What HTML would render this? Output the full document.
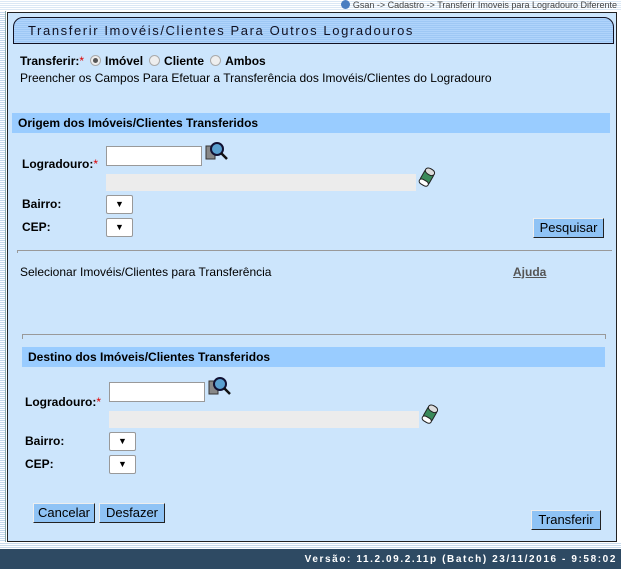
<!DOCTYPE html>
<html><head><meta charset="utf-8"><style>
*{margin:0;padding:0;box-sizing:border-box}
body{width:621px;height:569px;position:relative;overflow:hidden;background:#fff;font-family:"Liberation Sans",Arial,sans-serif;font-size:12px;color:#000}
.a{position:absolute}
#top{left:0;top:0;width:621px;height:11px;background:repeating-linear-gradient(#fff 0 1px,#dbe8f5 1px 2px)}
#left{left:0;top:11px;width:6px;height:532px;background:repeating-linear-gradient(#fff 0 1px,#c4d8ec 1px 2px);border-right:1px solid #8aa}
#panel{left:7px;top:12px;width:610px;height:530px;background:#cce5fc;border:1px solid #222}
#title{left:13px;top:17px;width:601px;height:27px;border:1px solid #112;border-radius:10px 10px 0 0;background:repeating-linear-gradient(#b0d4fb 0 1px,#9ec8f5 1px 2px);font-size:13px;letter-spacing:1.6px;color:#112;padding:5px 0 0 14px}
.hd{background:#99ccff;font-weight:bold;padding:3px 0 0 6px;height:20px}
.in{background:#fff;border:1px solid #999}
.gr{background:#ececec}
.sel{background:#fff;border:1px solid #999;border-radius:2px;font-size:9px;text-align:center;line-height:17px}
.btn{background:#8fc3f5;border:1px solid #222;border-top-color:#eee;border-left-color:#eee;font-size:13px;text-align:center;line-height:18px}
.lb{font-weight:bold}
.r{color:#d00}
.rad{display:inline-block;width:11px;height:11px;border:1px solid #aaa;border-radius:50%;background:#eee;vertical-align:-1px;margin:0 4px 0 6px;position:relative}
.rad.on::after{content:"";position:absolute;left:2px;top:2px;width:5px;height:5px;border-radius:50%;background:#555}
#foot{left:0;top:549px;width:621px;height:20px;background:#2e4a63;color:#fff;font-weight:bold;font-size:10px;letter-spacing:1.6px;text-align:right;padding:5px 4px 0 0}
#fl{left:0;top:542px;width:621px;height:7px;background:repeating-linear-gradient(#fff 0 1px,#c9dbec 1px 2px)}
</style></head><body>
<div id="top" class="a"></div>
<div class="a" style="right:4px;top:0;font-size:9px;color:#444"><span style="display:inline-block;width:9px;height:9px;border-radius:50%;background:#4a7ec0;vertical-align:-1px"></span> Gsan -&gt; Cadastro -&gt; Transferir Imoveis para Logradouro Diferente</div>
<div id="left" class="a"></div>
<div id="panel" class="a"></div>
<div id="title" class="a">Transferir Imovéis/Clientes Para Outros Logradouros</div>
<div class="a" style="left:20px;top:54px;font-size:12px"><b>Transferir:</b><span class="r">*</span><span class="rad on"></span><b>Imóvel</b><span class="rad"></span><b>Cliente</b><span class="rad"></span><b>Ambos</b></div>
<div class="a" style="left:20px;top:71px">Preencher os Campos Para Efetuar a Transferência dos Imovéis/Clientes do Logradouro</div>
<div class="a hd" style="left:12px;top:113px;width:598px">Origem dos Imóveis/Clientes Transferidos</div>
<div class="a lb" style="left:22px;top:157px">Logradouro:<span class="r" style="font-weight:normal">*</span></div>
<div class="a in" style="left:106px;top:146px;width:96px;height:20px"></div>
<svg class="a" style="left:205px;top:141px" width="24" height="20"><rect x="1" y="5" width="9" height="13" fill="#888" stroke="#333"/><circle cx="12" cy="8" r="6" fill="#5aa0d0" stroke="#113" stroke-width="2"/><line x1="16" y1="12" x2="22" y2="18" stroke="#111" stroke-width="2.5"/></svg>
<div class="a gr" style="left:106px;top:174px;width:310px;height:17px"></div>
<svg class="a" style="left:418px;top:166px" width="18" height="22"><g transform="rotate(30 9 11)"><rect x="4" y="2" width="10" height="18" rx="5" fill="#3a8a5a" stroke="#222"/><rect x="4" y="2" width="10" height="6" rx="4" fill="#ddd" stroke="#222"/><rect x="4" y="15" width="10" height="5" rx="3" fill="#fff" stroke="#222"/></g></svg>
<div class="a lb" style="left:22px;top:197px">Bairro:</div>
<div class="a sel" style="left:106px;top:195px;width:27px;height:19px">▼</div>
<div class="a lb" style="left:22px;top:220px">CEP:</div>
<div class="a sel" style="left:106px;top:218px;width:27px;height:19px">▼</div>
<div class="a btn" style="left:533px;top:218px;width:71px;height:20px">Pesquisar</div>
<div class="a" style="left:17px;top:250px;width:595px;height:3px;border-top:1px solid #999;border-left:1px solid #999"></div>
<div class="a" style="left:20px;top:265px">Selecionar Imovéis/Clientes para Transferência</div>
<div class="a" style="left:513px;top:265px;color:#555;font-weight:bold;text-decoration:underline">Ajuda</div>
<div class="a" style="left:22px;top:334px;width:584px;height:5px;border:1px solid #999;border-bottom:none"></div>
<div class="a hd" style="left:22px;top:347px;width:583px">Destino dos Imóveis/Clientes Transferidos</div>
<div class="a lb" style="left:25px;top:395px">Logradouro:<span class="r" style="font-weight:normal">*</span></div>
<div class="a in" style="left:109px;top:382px;width:96px;height:20px"></div>
<svg class="a" style="left:208px;top:376px" width="24" height="20"><rect x="1" y="5" width="9" height="13" fill="#888" stroke="#333"/><circle cx="12" cy="8" r="6" fill="#5aa0d0" stroke="#113" stroke-width="2"/><line x1="16" y1="12" x2="22" y2="18" stroke="#111" stroke-width="2.5"/></svg>
<div class="a gr" style="left:109px;top:411px;width:310px;height:17px"></div>
<svg class="a" style="left:421px;top:403px" width="18" height="22"><g transform="rotate(30 9 11)"><rect x="4" y="2" width="10" height="18" rx="5" fill="#3a8a5a" stroke="#222"/><rect x="4" y="2" width="10" height="6" rx="4" fill="#ddd" stroke="#222"/><rect x="4" y="15" width="10" height="5" rx="3" fill="#fff" stroke="#222"/></g></svg>
<div class="a lb" style="left:25px;top:434px">Bairro:</div>
<div class="a sel" style="left:109px;top:432px;width:27px;height:19px">▼</div>
<div class="a lb" style="left:25px;top:457px">CEP:</div>
<div class="a sel" style="left:109px;top:455px;width:27px;height:19px">▼</div>
<div class="a btn" style="left:33px;top:503px;width:62px;height:20px">Cancelar</div>
<div class="a btn" style="left:99px;top:503px;width:66px;height:20px">Desfazer</div>
<div class="a btn" style="left:531px;top:510px;width:70px;height:20px">Transferir</div>
<div id="fl" class="a"></div>
<div id="foot" class="a">Versão: 11.2.09.2.11p (Batch) 23/11/2016 - 9:58:02</div>
</body></html>
